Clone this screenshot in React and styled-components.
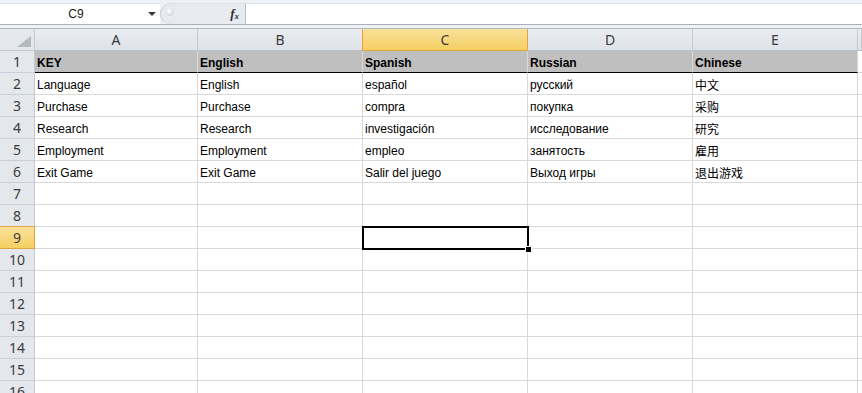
import styled, { createGlobalStyle } from "styled-components";

const GlobalStyle = createGlobalStyle`
  html, body {
    margin: 0;
    padding: 0;
    background: #ffffff;
    overflow: hidden;
  }
  body {
    font-family: "Liberation Sans", Arial, sans-serif;
  }
`;

const COLUMNS = ["A", "B", "C", "D", "E"];

const DATA = [
  ["KEY", "English", "Spanish", "Russian", "Chinese"],
  ["Language", "English", "español", "русский", "中文"],
  ["Purchase", "Purchase", "compra", "покупка", "采购"],
  ["Research", "Research", "investigación", "исследование", "研究"],
  ["Employment", "Employment", "empleo", "занятость", "雇用"],
  ["Exit Game", "Exit Game", "Salir del juego", "Выход игры", "退出游戏"],
];

const ROW_COUNT = 16;
const ACTIVE_COL = 2;
const ACTIVE_ROW = 9;

export default function App() {
  const rows = Array.from({ length: ROW_COUNT }, (_, i) => i + 1);

  return (
    <>
      <GlobalStyle />
      <Window>
        <FormulaBar>
          <NameBox>
            <NameText>C9</NameText>
            <DropArrow />
          </NameBox>
          <Grip>
            <GripKnob />
            <FxLabel>
              f<sub>x</sub>
            </FxLabel>
          </Grip>
          <FormulaInput />
        </FormulaBar>
        <BarGap />
        <Sheet>
          <Corner>
            <svg width="14" height="11" viewBox="0 0 14 11">
              <polygon points="0,11 14,11 14,0" fill="#b4b9bf" />
            </svg>
          </Corner>
          {COLUMNS.map((c, i) => (
            <ColHeader key={c} $active={i === ACTIVE_COL}>
              {c}
            </ColHeader>
          ))}
          <ColHeader />

          {rows.map((r) => {
            const values = DATA[r - 1] || [];
            const isHead = r === 1;
            return [
              <RowHeader key={`h${r}`} $active={r === ACTIVE_ROW}>
                {r}
              </RowHeader>,
              ...COLUMNS.map((c, i) => (
                <Cell key={`${c}${r}`} $head={isHead}>
                  <CellText $head={isHead}>{values[i] || ""}</CellText>
                  {r === ACTIVE_ROW && i === ACTIVE_COL && (
                    <Selection>
                      <FillHandle />
                    </Selection>
                  )}
                </Cell>
              )),
              <Cell key={`F${r}`} $last />,
            ];
          })}
        </Sheet>
      </Window>
    </>
  );
}

const Window = styled.div`
  width: 862px;
  height: 393px;
  overflow: hidden;
  background: #ffffff;
`;

const FormulaBar = styled.div`
  display: flex;
  height: 25px;
  box-sizing: border-box;
  padding-top: 3px;
  background: #eef1f5;
  border-bottom: 1px solid #a9b0b9;
`;

const NameBox = styled.div`
  width: 160px;
  display: flex;
  align-items: center;
  background: #ffffff;
  border-top: 1px solid #dde1e6;
`;

const NameText = styled.span`
  flex: 1;
  text-align: center;
  font-size: 12px;
  color: #1a1a1a;
  padding-left: 4px;
`;

const DropArrow = styled.span`
  width: 0;
  height: 0;
  margin-right: 4px;
  border-left: 4px solid transparent;
  border-right: 4px solid transparent;
  border-top: 4px solid #3c3c3c;
`;

const Grip = styled.div`
  width: 86px;
  display: flex;
  align-items: center;
  justify-content: space-between;
  background: #e7eaee;
  border-top: 1px solid #dde1e6;
  border-right: 1px solid #b6bcc4;
  border-radius: 11px 0 0 11px;
  box-shadow: inset 1px 0 0 #c9ced5;
  padding-right: 6px;
  box-sizing: border-box;
`;

const GripKnob = styled.span`
  width: 8px;
  height: 8px;
  margin-left: 6px;
  margin-bottom: 4px;
  border-radius: 50%;
  background: radial-gradient(circle at 40% 35%, #ffffff, #c4c9cf);
`;

const FxLabel = styled.span`
  font-family: "Liberation Serif", "Times New Roman", serif;
  font-style: italic;
  font-weight: bold;
  font-size: 13px;
  color: #2e2e2e;
  sub {
    font-size: 9px;
    vertical-align: -1px;
  }
`;

const FormulaInput = styled.div`
  flex: 1;
  background: #ffffff;
  border-top: 1px solid #dde1e6;
`;

const BarGap = styled.div`
  height: 3px;
  background: #eef1f5;
  border-bottom: 1px solid #b3b9c1;
`;

const Sheet = styled.div`
  display: grid;
  grid-template-columns: 35px 163px 165px 165px 165px 165px 1fr;
  grid-auto-rows: 22px;
`;

const Corner = styled.div`
  box-sizing: border-box;
  background: #e4e8ed;
  border-right: 1px solid #c3c9d1;
  border-bottom: 1px solid #c3c9d1;
  display: flex;
  align-items: flex-end;
  justify-content: flex-end;
  padding: 0 3px 3px 0;
`;

const ColHeader = styled.div`
  box-sizing: border-box;
  display: flex;
  align-items: center;
  justify-content: center;
  font-family: "Noto Sans", "Liberation Sans", sans-serif;
  font-size: 14px;
  color: #3b3b3b;
  background: ${(p) =>
    p.$active
      ? "linear-gradient(#f9e19a, #f6cf62)"
      : "linear-gradient(#e9ecf0, #dfe3e9)"};
  border-right: 1px solid ${(p) => (p.$active ? "#e3a33e" : "#c3c9d1")};
  border-bottom: 1px solid ${(p) => (p.$active ? "#e3a33e" : "#b9c0c9")};
  border-left: ${(p) => (p.$active ? "1px solid #e3a33e" : "none")};
  margin-left: ${(p) => (p.$active ? "-1px" : "0")};
`;

const RowHeader = styled.div`
  box-sizing: border-box;
  display: flex;
  align-items: center;
  justify-content: center;
  font-family: "Noto Sans", "Liberation Sans", sans-serif;
  font-size: 14px;
  color: #3b3b3b;
  background: ${(p) =>
    p.$active ? "linear-gradient(#f9e19a, #f6cf62)" : "#e4e8ed"};
  border-right: 1px solid ${(p) => (p.$active ? "#e3a33e" : "#c3c9d1")};
  border-bottom: 1px solid ${(p) => (p.$active ? "#e3a33e" : "#c9cfd6")};
  border-top: ${(p) => (p.$active ? "1px solid #e3a33e" : "none")};
  margin-top: ${(p) => (p.$active ? "-1px" : "0")};
`;

const Cell = styled.div`
  position: relative;
  box-sizing: border-box;
  display: flex;
  align-items: center;
  padding: 2px 0 0 2px;
  background: ${(p) => (p.$head ? "#bfbfbf" : "#ffffff")};
  border-right: ${(p) => (p.$last ? "none" : "1px solid #d9d9d9")};
  border-bottom: 1px solid ${(p) => (p.$head ? "#000000" : "#d9d9d9")};
`;

const CellText = styled.span`
  font-family: "Liberation Sans", "Noto Sans CJK SC", sans-serif;
  font-size: 12px;
  font-weight: ${(p) => (p.$head ? "bold" : "normal")};
  color: #000000;
  white-space: nowrap;
`;

const Selection = styled.div`
  position: absolute;
  z-index: 2;
  top: -1px;
  left: -1px;
  right: -2px;
  bottom: -2px;
  border: 2px solid #000000;
  pointer-events: none;
`;

const FillHandle = styled.div`
  position: absolute;
  right: -5px;
  bottom: -5px;
  width: 5px;
  height: 5px;
  background: #000000;
  border: 1px solid #ffffff;
`;
